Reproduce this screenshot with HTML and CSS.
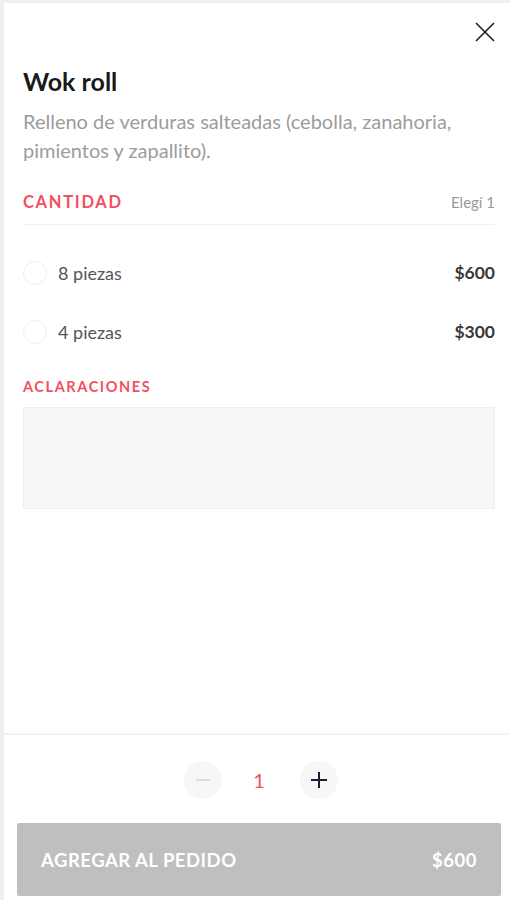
FILE: index.html
```html
<!DOCTYPE html>
<html>
<head>
  <title>Wok roll</title>
  <meta charset="UTF-8" />
  <meta name="viewport" content="width=device-width, initial-scale=1.0"/>
  <link rel="stylesheet" href="styles.css">
</head>
<body>
  <div class="panel">
    <div class="content">
      <div class="close-row">
        <button class="close" aria-label="Cerrar">
          <svg width="20" height="20" viewBox="0 0 20 20"><path d="M1 1L19 19M19 1L1 19" stroke="#1c1c2a" stroke-width="1.6" fill="none"/></svg>
        </button>
      </div>
      <h1 class="title">Wok roll</h1>
      <p class="desc">Relleno de verduras salteadas (cebolla, zanahoria, pimientos y zapallito).</p>

      <div class="section-head">
        <span class="section-title">CANTIDAD</span>
        <span class="hint">Elegí 1</span>
      </div>

      <div class="options">
        <label class="option">
          <span class="radio"></span>
          <span class="opt-name">8 piezas</span>
          <span class="opt-price">$600</span>
        </label>
        <label class="option">
          <span class="radio"></span>
          <span class="opt-name">4 piezas</span>
          <span class="opt-price">$300</span>
        </label>
      </div>

      <div class="section-title notes-title">ACLARACIONES</div>
      <textarea class="notes"></textarea>
    </div>

    <div class="footer">
      <div class="stepper">
        <button class="step minus">
          <svg width="16" height="16" viewBox="0 0 16 16"><path d="M1 8H15" stroke="#d4d4d4" stroke-width="1.6"/></svg>
        </button>
        <span class="qty">1</span>
        <button class="step plus">
          <svg width="18" height="18" viewBox="0 0 18 18"><path d="M1 9H17M9 1V17" stroke="#1b1b3a" stroke-width="2"/></svg>
        </button>
      </div>
      <button class="add">
        <span>AGREGAR AL PEDIDO</span>
        <span>$600</span>
      </button>
    </div>
  </div>
</body>
</html>
```

FILE: styles.css
```css
body { margin: 0; background: #efefef; font-family: Lato, "Open Sans", sans-serif; }
.panel { margin: 3px 0 0 4px; background: #fff; height: 897px; display: flex; flex-direction: column; }
.content { flex: 1; padding: 0 15px 0 19px; }
.close-row { display: flex; justify-content: flex-end; padding-top: 19px; }
.close { background: none; border: none; padding: 0; width: 20px; height: 20px; cursor: pointer; }
.title { margin: 26px 0 0; font-size: 25px; font-weight: 700; color: #1a1a1a; line-height: 26px; }
.desc { margin: 13px 0 0; font-size: 20px; color: #9c9c9c; line-height: 29px; }
.section-head { display: flex; justify-content: space-between; align-items: center; margin-top: 27px; padding-bottom: 12px; border-bottom: 1px solid #f0f0f0; }
.section-title { color: #f2505f; font-size: 16.5px; font-weight: 700; letter-spacing: 1.7px; line-height: 20px; }
.hint { color: #999; font-size: 15px; line-height: 20px; }
.options { margin-top: 18px; }
.option { display: flex; align-items: center; height: 59px; }
.radio { width: 24px; height: 24px; box-sizing: border-box; border: 1px solid #eee; border-radius: 50%; margin-right: 11px; }
.opt-name { flex: 1; color: #555; font-size: 18px; }
.opt-price { color: #383838; font-size: 17.5px; font-weight: 700; }
.notes-title { margin-top: 17px; font-size: 14.5px; letter-spacing: 1.6px; line-height: 18px; }
.notes { display: block; box-sizing: border-box; width: 100%; height: 102px; margin-top: 11px; background: #f7f7f7; border: 1px solid #eee; resize: none; }
.footer { border-top: 2px solid #f2f2f2; padding: 26px 9px 4px 13px; }
.stepper { display: flex; justify-content: center; align-items: center; padding-left: 4px; }
.step { width: 38px; height: 38px; border-radius: 50%; border: none; background: #f7f7f7; display: flex; align-items: center; justify-content: center; padding: 0; }
.qty { width: 74px; padding-right: 4px; text-align: center; color: #f2505f; font-size: 20px; }
.add { display: flex; justify-content: space-between; align-items: center; width: 100%; height: 73px; margin-top: 24px; padding: 0 24px; background: #bfbfbf; color: #fff; border: none; border-radius: 2px; font-family: Lato, sans-serif; font-size: 18.5px; font-weight: 700; letter-spacing: 0.5px; }
```
